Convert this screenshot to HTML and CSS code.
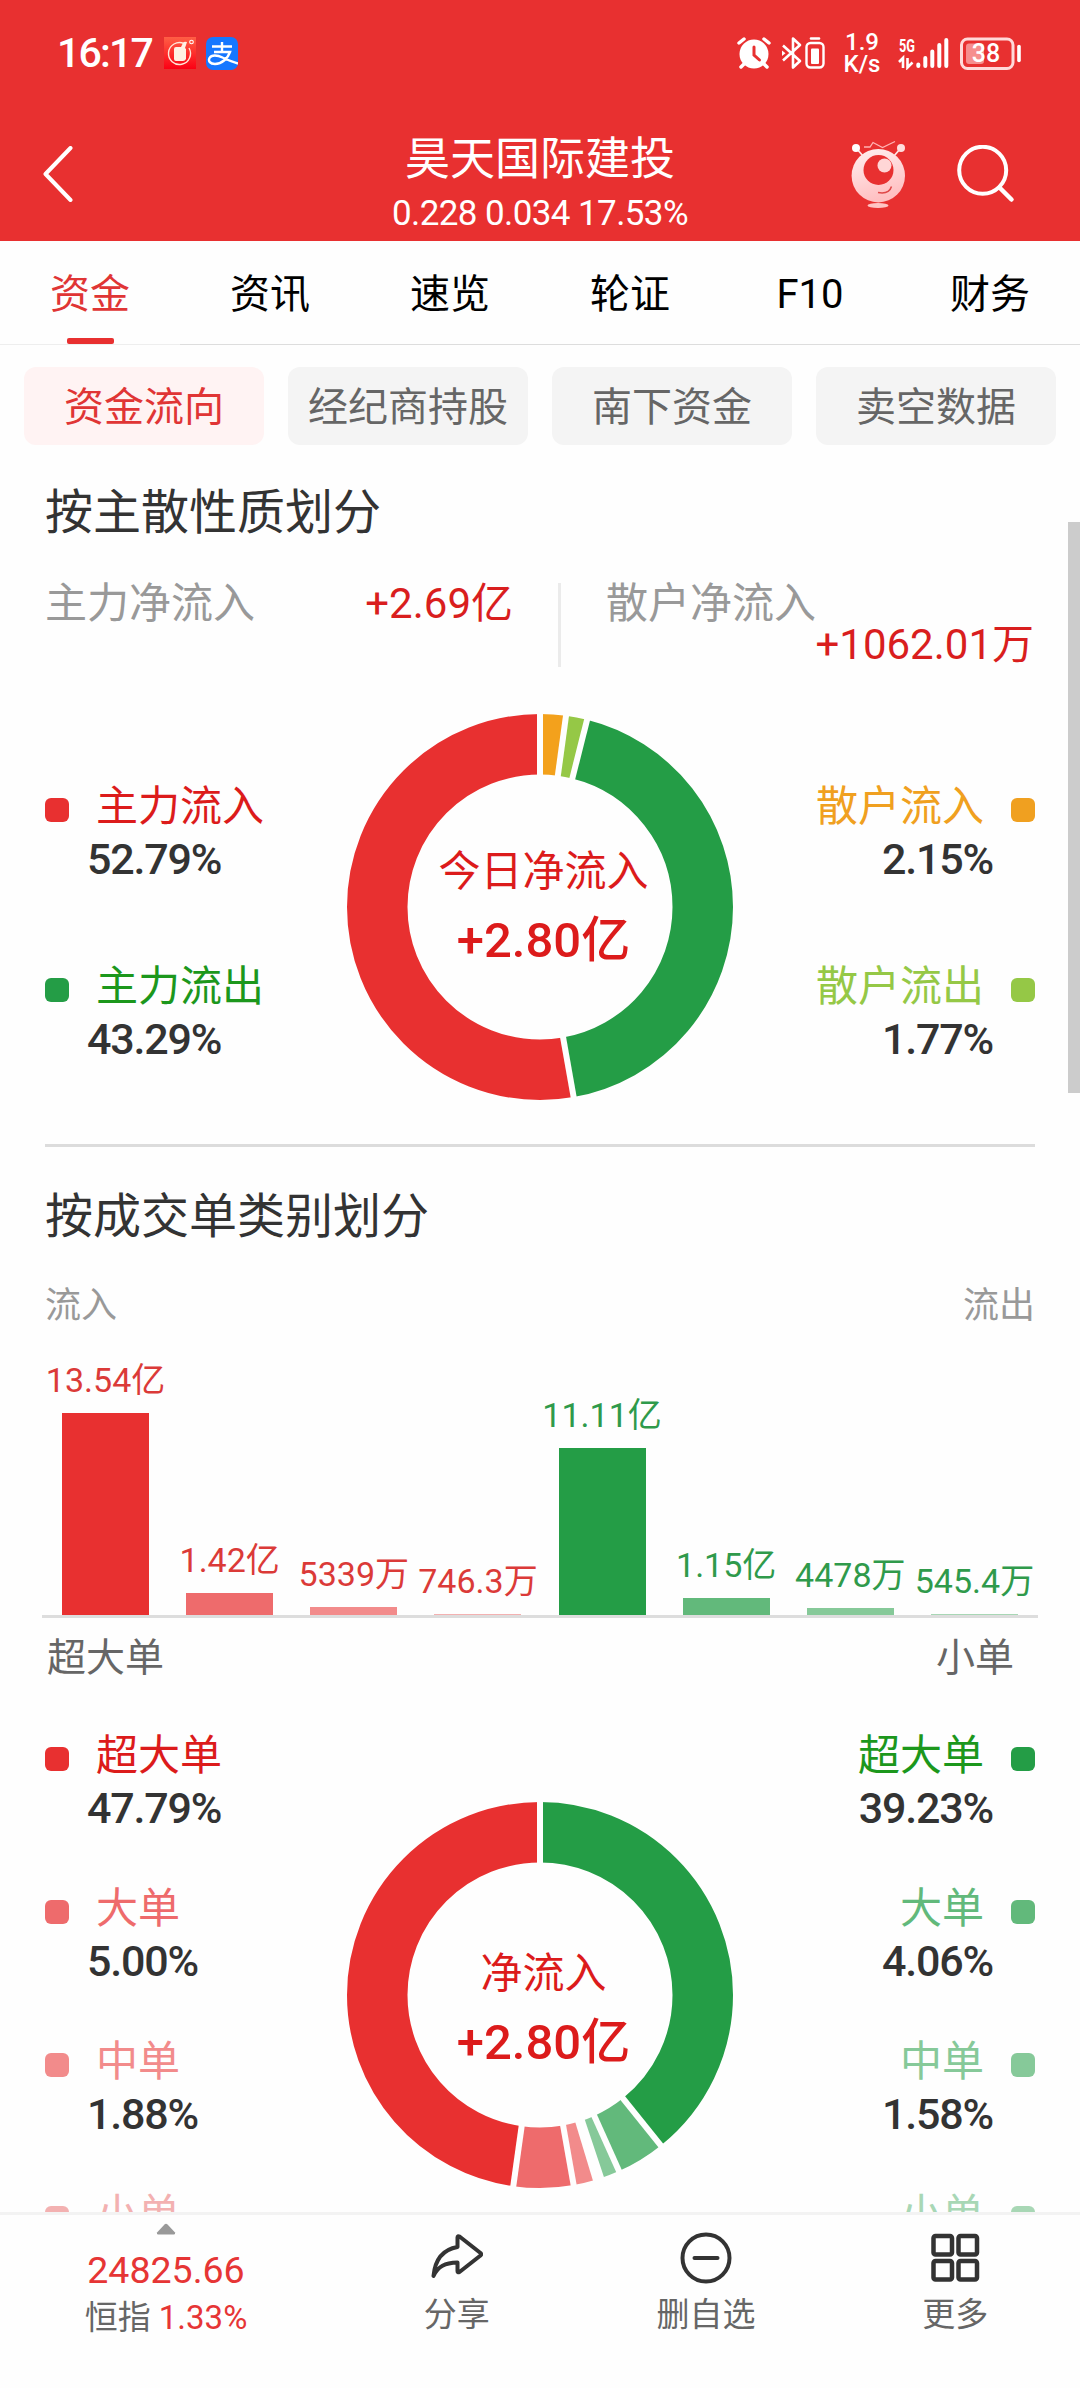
FILE: index.html
```html
<!DOCTYPE html>
<html lang="zh-CN">

<head>
    <meta charset="UTF-8">
    <meta name="viewport" content="width=device-width, initial-scale=1.0">
    <title>昊天国际建投</title>
    <link rel="stylesheet" href="styles.css">
</head>

<body>
    <div class="screen">
        <header class="header">
            <div class="status-bar">
                <span class="clock">16:17</span>
                <svg class="app-icon" width="32" height="32" viewBox="0 0 32 32">
                    <defs>
                        <linearGradient id="app-red" x1="0" y1="0" x2="0" y2="1">
                            <stop offset="0" stop-color="#ff5f45" />
                            <stop offset="1" stop-color="#fb0014" />
                        </linearGradient>
                    </defs>
                    <rect width="32" height="32" fill="url(#app-red)" />
                    <path d="M20 6.5A11 11 0 1 0 25 11" fill="none" stroke="#ffe6d8" stroke-width="1.4" />
                    <path d="M10 12q0-2 2-2h5l2-4q1-2 4-1l-2 6 1 1v10q-1 2-3 2h-7q-2 0-2-2z" fill="#fff1e4" />
                    <circle cx="27.5" cy="5" r="1.8" fill="none" stroke="#fff" stroke-width="1.1" />
                </svg>
                <svg class="app-icon pay" width="32" height="33" viewBox="0 0 32 33">
                    <rect width="32" height="33" rx="7" fill="#1677ff" />
                    <path d="M6 9.5h20M16 5v10M8 15h16C22 21 16 27 9 27c-5 0-7-3-5.500-6 2-3.500 8-3 13-.5 5 2.300 10 4.500 15.500 6" fill="none" stroke="#fff" stroke-width="2.400" />
                </svg>
                <div class="status-right">
                    <svg width="36" height="34" viewBox="0 0 36 34">
                        <circle cx="18" cy="18" r="14.500" fill="#fff" />
                        <path d="M3 7l5-4M33 7l-5-4M8 28l-3 3M28 28l3 3" stroke="#fff" stroke-width="3.500" stroke-linecap="round" />
                        <path d="M18 11v8l5.500 5" fill="none" stroke="#e83030" stroke-width="3" stroke-linecap="round" />
                    </svg>
                    <svg class="bluetooth" width="24" height="34" viewBox="0 0 24 34">
                        <path d="M3 9.500l17 15.500-7 6.500v-29l7 6.500-17 15.500" fill="none" stroke="#fff" stroke-width="2.600" stroke-linejoin="round" />
                        <path d="M2 14.500l3.500 2.700L2 20z" fill="#fff" />
                    </svg>
                    <svg class="device-battery" width="22" height="34" viewBox="0 0 22 34">
                        <path d="M7 2.500h8" stroke="#fff" stroke-width="2.600" stroke-linecap="round" />
                        <rect x="2.500" y="7" width="17" height="24.500" rx="4" fill="none" stroke="#fff" stroke-width="2.400" />
                        <rect x="7" y="12.500" width="8" height="15.500" rx="1" fill="#fff" />
                    </svg>
                    <div class="speed">
                        <span>1.9</span>
                        <span>K/s</span>
                    </div>
                    <svg class="signal" width="52" height="34" viewBox="0 0 52 34">
                        <text x="1" y="15.500" textLength="16" lengthAdjust="spacingAndGlyphs">5G</text>
                        <path d="M1 26l4-4v10M9.500 22v9.500l5-5" fill="none" stroke="#fff" stroke-width="2.600" />
                        <path d="M20.300 28.500v1.500M27.300 22v8M34.300 15.500V30M41.300 9v21M48.300 4v26" stroke="#fff" stroke-width="4" stroke-linecap="round" />
                    </svg>
                    <svg class="battery" width="64" height="34" viewBox="0 0 64 34">
                        <rect x="2.500" y="3" width="51.500" height="29.500" rx="6" fill="none" stroke="#ffd9d9" stroke-width="3" />
                        <rect x="7" y="7.500" width="18" height="20.500" rx="3" fill="#f68e8e" />
                        <path d="M60 10.500v14" stroke="#fff" stroke-width="3.600" stroke-linecap="round" />
                        <text x="27" y="26" text-anchor="middle">38</text>
                    </svg>
                </div>
            </div>

            <div class="title-bar">
                <svg class="back" width="30" height="56" viewBox="0 0 30 56">
                    <path d="M27.500 2L2.500 28l25 26" fill="none" stroke="#fff" stroke-width="4" stroke-linecap="round" stroke-linejoin="round" />
                </svg>
                <div class="stock">
                    <h1>昊天国际建投</h1>
                    <p>0.228 0.034 17.53%</p>
                </div>
                <div class="title-actions">
                    <svg width="56" height="70" viewBox="0 0 56 70">
                        <defs>
                            <linearGradient id="robot" x1="0" y1="0" x2="0.3" y2="1">
                                <stop offset="0" stop-color="#fff0f0" />
                                <stop offset="1" stop-color="#ffc0c2" />
                            </linearGradient>
                        </defs>
                        <path d="M6 10l6 7M49 10l-6 7" stroke="#ffe3e3" stroke-width="1.800" />
                        <circle cx="5" cy="9" r="4" fill="#fff" />
                        <circle cx="50" cy="9" r="4" fill="#ffdede" />
                        <path d="M13 8h6l3-4.500 9.500 5 12.500-6" fill="none" stroke="#ffb3b3" stroke-width="1.300" />
                        <circle cx="27.300" cy="36.700" r="26.700" fill="url(#robot)" />
                        <circle cx="27.500" cy="31" r="15" fill="#e83030" />
                        <circle cx="33.500" cy="26.500" r="7" fill="#ffd6d6" />
                        <path d="M27 53.500q11 2 13.500-6" fill="none" stroke="#e04848" stroke-width="1.500" />
                        <ellipse cx="27" cy="66.500" rx="10.500" ry="2.500" fill="#ffc4c4" />
                    </svg>
                    <svg width="60" height="58" viewBox="0 0 60 58">
                        <circle cx="26.700" cy="25.300" r="23.500" fill="none" stroke="#fff" stroke-width="4" />
                        <path d="M43.500 42.500L55.500 54.500" stroke="#fff" stroke-width="4.500" stroke-linecap="round" />
                    </svg>
                </div>
            </div>
        </header>

        <nav class="tabs">
            <a class="tab active">资金</a>
            <a class="tab">资讯</a>
            <a class="tab">速览</a>
            <a class="tab">轮证</a>
            <a class="tab">F10</a>
            <a class="tab">财务</a>
        </nav>

        <main class="content">
            <div class="pills">
                <a class="pill active">资金流向</a>
                <a class="pill">经纪商持股</a>
                <a class="pill">南下资金</a>
                <a class="pill">卖空数据</a>
            </div>

            <section class="section">
                <h2>按主散性质划分</h2>
                <div class="net-row">
                    <div class="net">
                        <span>主力净流入</span>
                        <b>+2.69亿</b>
                    </div>
                    <div class="net wrapped">
                        <span>散户净流入</span>
                        <b>+1062.01万</b>
                    </div>
                </div>

                <div class="panel">
                    <ul class="legend">
                        <li class="main-in"><i></i><span>主力流入</span><b>52.79%</b></li>
                        <li class="main-out"><i></i><span>主力流出</span><b>43.29%</b></li>
                    </ul>
                    <div class="donut">
                        <svg width="386" height="386" viewBox="-193 -193 386 386">
                            <g class="ring" transform="rotate(-90)">
                                <circle r="162.750" pathLength="100" stroke="#f3a11c" stroke-dasharray="2.15 97.85" />
                                <circle r="162.750" pathLength="100" stroke="#95c846" stroke-dasharray="1.77 98.23" stroke-dashoffset="-2.15" />
                                <circle r="162.750" pathLength="100" stroke="#249d46" stroke-dasharray="43.29 56.71" stroke-dashoffset="-3.92" />
                                <circle r="162.750" pathLength="100" stroke="#e83030" stroke-dasharray="52.79 47.21" stroke-dashoffset="-47.21" />
                            </g>
                            <g class="gaps">
                                <path d="M0-128v-68" />
                                <path d="M0-128v-68" transform="rotate(7.74)" />
                                <path d="M0-128v-68" transform="rotate(14.11)" />
                                <path d="M0-128v-68" transform="rotate(169.96)" />
                            </g>
                        </svg>
                        <div class="donut-text">
                            <span>今日净流入</span>
                            <b>+2.80亿</b>
                        </div>
                    </div>
                    <ul class="legend right">
                        <li class="retail-in"><i></i><span>散户流入</span><b>2.15%</b></li>
                        <li class="retail-out"><i></i><span>散户流出</span><b>1.77%</b></li>
                    </ul>
                </div>
            </section>

            <section class="section orders">
                <h2>按成交单类别划分</h2>
                <div class="flow-names">
                    <span>流入</span>
                    <span>流出</span>
                </div>
                <div class="chart">
                    <div class="col in-1"><span>13.54亿</span><i style="height: 202.5px"></i></div>
                    <div class="col in-2"><span>1.42亿</span><i style="height: 22px"></i></div>
                    <div class="col in-3"><span>5339万</span><i style="height: 8.5px"></i></div>
                    <div class="col in-4"><span>746.3万</span><i style="height: 1.5px"></i></div>
                    <div class="col out-1"><span>11.11亿</span><i style="height: 167px"></i></div>
                    <div class="col out-2"><span>1.15亿</span><i style="height: 17.5px"></i></div>
                    <div class="col out-3"><span>4478万</span><i style="height: 7px"></i></div>
                    <div class="col out-4"><span>545.4万</span><i style="height: 1px"></i></div>
                </div>
                <div class="axis-names">
                    <span>超大单</span>
                    <span>小单</span>
                </div>

                <div class="panel">
                    <ul class="legend">
                        <li class="main-in"><i></i><span>超大单</span><b>47.79%</b></li>
                        <li class="in-2"><i></i><span>大单</span><b>5.00%</b></li>
                        <li class="in-3"><i></i><span>中单</span><b>1.88%</b></li>
                        <li class="in-4"><i></i><span>小单</span></li>
                    </ul>
                    <div class="donut">
                        <svg width="386" height="386" viewBox="-193 -193 386 386">
                            <g class="ring" transform="rotate(-90)">
                                <circle r="162.750" pathLength="100" stroke="#249d46" stroke-dasharray="39.23 60.77" />
                                <circle r="162.750" pathLength="100" stroke="#62b97b" stroke-dasharray="4.06 95.94" stroke-dashoffset="-39.23" />
                                <circle r="162.750" pathLength="100" stroke="#86c999" stroke-dasharray="1.58 98.42" stroke-dashoffset="-43.29" />
                                <circle r="162.750" pathLength="100" stroke="#f28b8b" stroke-dasharray="1.88 98.12" stroke-dashoffset="-45.33" />
                                <circle r="162.750" pathLength="100" stroke="#ee6b6c" stroke-dasharray="5 95" stroke-dashoffset="-47.21" />
                                <circle r="162.750" pathLength="100" stroke="#e83030" stroke-dasharray="47.79 52.21" stroke-dashoffset="-52.21" />
                            </g>
                            <g class="gaps">
                                <path d="M0-128v-68" />
                                <path d="M0-128v-68" transform="rotate(141.23)" />
                                <path d="M0-128v-68" transform="rotate(155.84)" />
                                <path d="M0-128v-68" transform="rotate(161.53)" />
                                <path d="M0-128v-68" transform="rotate(163.19)" />
                                <path d="M0-128v-68" transform="rotate(169.96)" />
                                <path d="M0-128v-68" transform="rotate(187.96)" />
                            </g>
                        </svg>
                        <div class="donut-text">
                            <span>净流入</span>
                            <b>+2.80亿</b>
                        </div>
                    </div>
                    <ul class="legend right">
                        <li class="main-out"><i></i><span>超大单</span><b>39.23%</b></li>
                        <li class="out-2"><i></i><span>大单</span><b>4.06%</b></li>
                        <li class="out-3"><i></i><span>中单</span><b>1.58%</b></li>
                        <li class="out-4"><i></i><span>小单</span></li>
                    </ul>
                </div>
            </section>
        </main>

        <footer class="bottom-bar">
            <div class="index">
                <svg width="20" height="12" viewBox="0 0 20 12">
                    <path d="M8.500 1.500q1.500-1.500 3 0l7.500 8q.5 2-1 2H2q-1.500 0-1-2z" fill="#999" />
                </svg>
                <b>24825.66</b>
                <p>恒指 <em>1.33%</em></p>
            </div>
            <a class="action">
                <svg width="52" height="52" viewBox="0 0 52 52">
                    <path d="M2.500 44C4 28 12 17.500 26.500 15V5.500q0-2 2-1L49.500 21q1.500 1.500 0 2.500L28.500 40q-2 1-2-1v-8.500C14 31 7 34 2.500 44z" fill="none" stroke="#333" stroke-width="4" stroke-linejoin="round" />
                </svg>
                <span>分享</span>
            </a>
            <a class="action">
                <svg width="52" height="52" viewBox="0 0 52 52">
                    <circle cx="26" cy="26" r="23.500" fill="none" stroke="#333" stroke-width="4" />
                    <path d="M14.500 26h23" stroke="#333" stroke-width="4" stroke-linecap="round" />
                </svg>
                <span>删自选</span>
            </a>
            <a class="action">
                <svg width="52" height="52" viewBox="0 0 52 52">
                    <g fill="none" stroke="#333" stroke-width="4.500">
                        <rect x="4.500" y="4" width="18.500" height="18.500" rx="2" />
                        <rect x="29.500" y="4" width="18.500" height="18.500" rx="2" />
                        <rect x="4.500" y="29" width="18.500" height="18.500" rx="2" />
                        <rect x="29.500" y="29" width="18.500" height="18.500" rx="2" />
                    </g>
                </svg>
                <span>更多</span>
            </a>
        </footer>

        <div class="scrollbar"></div>
    </div>
</body>

</html>
```

FILE: styles.css
```css
* {
    margin: 0;
    padding: 0;
    box-sizing: border-box;
    list-style: none;
    text-decoration: none;
    font-style: normal;
}

body {
    background-color: #fefefe;
    font-family: Roboto, "Noto Sans CJK SC", sans-serif;
    color: #333;
}

svg {
    display: block;
    flex-shrink: 0;
}

b,
h1,
h2 {
    font-weight: 400;
}

.screen {
    position: relative;
    display: flex;
    flex-direction: column;
    width: 1080px;
    height: 2388px;
    overflow: hidden;
}

/* header */
.header {
    height: 241px;
    background-color: #e83030;
    color: white;
}

.status-bar {
    display: flex;
    align-items: center;
    height: 106px;
    padding: 0 57px 0 57px;
}

.clock {
    width: 107px;
    font-size: 41px;
    font-weight: 500;
    letter-spacing: -1.8px;
}

.pay {
    margin-left: 10px;
}

.status-right {
    display: flex;
    align-items: center;
    margin-left: auto;
}

.bluetooth {
    margin-left: 8px;
}

.speed {
    width: 34px;
    margin: 0 19px;
    display: flex;
    flex-direction: column;
    align-items: center;
    font-size: 24px;
    font-weight: 500;
    line-height: 22px;
}

.signal text {
    font-size: 18px;
    font-weight: 700;
    fill: white;
}

.battery {
    margin-left: 9px;
}

.battery text {
    font-size: 25px;
    font-weight: 500;
    fill: white;
}

.title-bar {
    display: grid;
    grid-template-columns: 1fr auto 1fr;
    height: 135px;
    padding: 0 64px 0 43px;
    align-items: center;
}

.stock {
    align-self: start;
    padding: 27px 0 0 21px;
    text-align: center;
}

.stock h1 {
    font-size: 45px;
    line-height: 54px;
}

.stock p {
    font-size: 35px;
    line-height: 53px;
    letter-spacing: -0.6px;
}

.title-actions {
    display: flex;
    align-items: center;
    justify-content: flex-end;
    gap: 49px;
}

/* tabs */
.tabs {
    display: grid;
    grid-template-columns: repeat(6, 1fr);
    height: 103px;
}

.tab {
    display: flex;
    flex-direction: column;
    align-items: center;
    padding-top: 24px;
    font-size: 40px;
    line-height: 60px;
    color: black;
    border-bottom: 1px solid #ddd;
}

.tab.active {
    color: #e03535;
    border-color: #eee;
}

.tab.active::after {
    content: "";
    width: 47px;
    height: 6px;
    margin-top: 13px;
    border-radius: 2px;
    background-color: #e83030;
}

/* content */
.content {
    height: 1868px;
    overflow: hidden;
}

.pills {
    display: grid;
    grid-template-columns: repeat(4, 1fr);
    gap: 24px;
    padding: 23px 24px 0;
}

.pill {
    height: 78px;
    border-radius: 12px;
    background-color: #f4f4f4;
    color: #666;
    font-size: 40px;
    line-height: 82px;
    text-align: center;
}

.pill.active {
    background-color: #fff3f3;
    color: #e03535;
}

.section {
    margin: 0 45px;
    padding-top: 37px;
}

.section h2 {
    font-size: 48px;
    line-height: 61px;
}

.net-row {
    display: grid;
    grid-template-columns: 516px 1fr;
    height: 84px;
    margin-top: 40px;
}

.net {
    display: flex;
    align-items: flex-start;
    justify-content: space-between;
    font-size: 42px;
    line-height: 41px;
    color: #999;
}

.net:first-child {
    padding-right: 45px;
    border-right: 3px solid #ebebeb;
}

.net b {
    color: #d91e1e;
}

/* a long amount goes to the line below its label */
.net.wrapped {
    flex-direction: column;
    justify-content: flex-start;
    padding-left: 45px;
}

.net.wrapped b {
    align-self: flex-end;
    margin-right: 1px;
}

/* legends and donuts */
.panel {
    display: grid;
    grid-template-columns: 1fr 386px 1fr;
    align-items: start;
    margin-top: 47px;
}

.legend {
    display: grid;
    gap: 75px;
    padding-top: 69px;
}

.legend li {
    display: grid;
    grid-template-columns: 24px 1fr;
    column-gap: 27px;
    font-size: 42px;
    line-height: 48px;
}

.legend i {
    width: 24px;
    height: 24px;
    margin-top: 15px;
    border-radius: 6px;
    background-color: currentColor;
}

.legend b {
    grid-column: 1 / 3;
    padding-left: 42px;
    font-size: 43px;
    font-weight: 500;
    line-height: 57px;
    letter-spacing: -1.2px;
    color: #333;
}

.legend.right li {
    grid-template-columns: 1fr 24px;
    text-align: right;
}

.legend.right i {
    order: 1;
}

.legend.right b {
    order: 2;
    padding: 0 42px 0 0;
}

.donut {
    display: grid;
    place-items: center;
}

.donut > * {
    grid-area: 1 / 1;
}

.ring {
    fill: none;
    stroke-width: 60.5px;
}

.gaps {
    stroke: #fefefe;
    stroke-width: 6px;
}

.donut-text {
    display: flex;
    flex-direction: column;
    align-items: center;
    padding: 1px 0 0 7px;
    color: #dc1b1b;
}

.donut-text span {
    font-size: 42px;
    line-height: 66px;
}

.donut-text b {
    font-size: 49px;
    font-weight: 500;
    line-height: 71px;
}

/* orders by size */
.orders {
    margin-top: 44px;
    padding-top: 39px;
    border-top: 3px solid #dcdcdc;
}

.flow-names,
.axis-names {
    display: flex;
    justify-content: space-between;
}

.flow-names {
    margin-top: 37px;
    font-size: 36px;
    line-height: 44px;
    color: #999;
}

.chart {
    display: grid;
    grid-template-columns: repeat(8, 1fr);
    height: 290px;
    margin: 0 -3px;
    padding: 0 1.5px;
    border-bottom: 3px solid #ddd;
}

.col {
    display: flex;
    flex-direction: column;
    align-items: center;
    justify-content: flex-end;
}

.col span {
    font-size: 34px;
    line-height: 40px;
    margin-bottom: 13px;
    color: #db3a38;
}

.col[class*="out"] span {
    color: #2f9a4b;
}

.col i {
    width: 87px;
    background-color: currentColor;
}

.axis-names {
    margin-top: 16px;
    padding: 0 21px 0 2px;
    font-size: 39px;
    line-height: 48px;
    color: #666;
}

.orders .panel {
    margin-top: 50px;
}

.orders .legend {
    gap: 48px;
    padding-top: 0;
}

.orders .donut {
    margin-top: 70px;
}

.orders .donut-text {
    padding-top: 28px;
}

/* flow colors */
.in-1 {
    color: #e83030;
}

.in-2 {
    color: #ee6b6c;
}

.in-3 {
    color: #f28b8b;
}

.in-4 {
    color: #f3b1b1;
}

.out-1 {
    color: #249d46;
}

.out-2 {
    color: #62b97b;
}

.out-3 {
    color: #86c999;
}

.out-4 {
    color: #a8d7b5;
}

.main-in {
    color: #dc1b1b;
}

.main-in i {
    background-color: #e83030;
}

.main-out {
    color: #1c971c;
}

.main-out i {
    background-color: #249d46;
}

.retail-in {
    color: #f0a020;
}

.retail-out {
    color: #95c846;
}

/* bottom bar */
.bottom-bar {
    display: grid;
    grid-template-columns: 332px repeat(3, 1fr);
    height: 176px;
    border-top: 3px solid #f3f3f3;
    background-color: #fefefe;
}

.index {
    display: flex;
    flex-direction: column;
    align-items: center;
    padding-top: 8px;
}

.index b {
    margin-top: 12px;
    font-size: 37.5px;
    line-height: 46px;
    color: #e63535;
}

.index p {
    margin-top: 2px;
    font-size: 33px;
    line-height: 46px;
    color: #666;
}

.index em {
    color: #e63535;
}

.action {
    display: flex;
    flex-direction: column;
    align-items: center;
    padding-top: 17px;
    font-size: 33px;
    line-height: 46px;
    color: #666;
}

.action span {
    margin-top: 8px;
}

.scrollbar {
    position: absolute;
    top: 522px;
    right: 0;
    width: 12px;
    height: 571px;
    background-color: #ccc;
}
```
